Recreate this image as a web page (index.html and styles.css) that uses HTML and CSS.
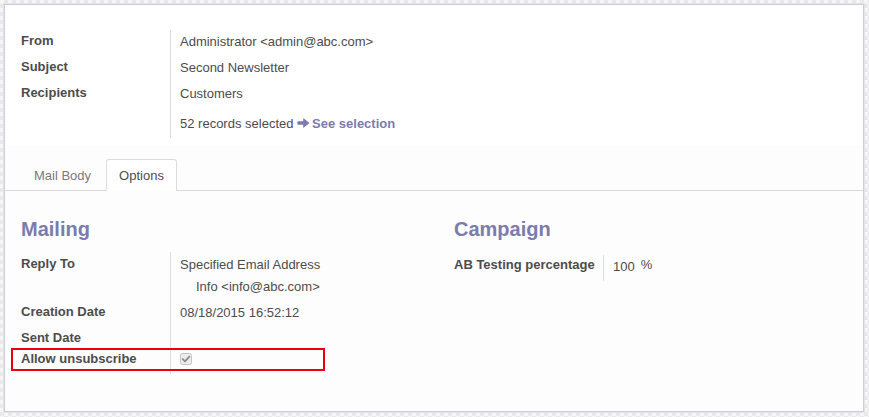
FILE: index.html
```html
<!DOCTYPE html>
<html>
<head>
<meta charset="utf-8">
<link rel="stylesheet" href="styles.css">
</head>
<body>
<div class="sheet">
  <div class="header">
    <div class="grp">
      <div class="lbl r1">From</div><div class="val r1">Administrator &lt;admin@abc.com&gt;</div>
      <div class="lbl r1">Subject</div><div class="val r1">Second Newsletter</div>
      <div class="lbl r1">Recipients</div><div class="val r1">Customers</div>
      <div class="lbl r4"></div>
      <div class="val r4">52 records selected <a class="link"><svg class="arrow" width="13" height="12" viewBox="0 0 13 12"><path d="M1 4.3 H6.2 V1.6 Q6.2 0.8 6.9 1.4 L11.9 5.4 Q12.5 6 11.9 6.6 L6.9 10.6 Q6.2 11.2 6.2 10.4 V7.7 H1 Q0.4 7.7 0.4 7.1 V4.9 Q0.4 4.3 1 4.3 Z" fill="#7c7bad"/></svg>See selection</a></div>
    </div>
  </div>
  <div class="tabs">
    <div class="tab">Mail Body</div>
    <div class="tab active">Options</div>
  </div>
  <div class="pane">
    <div class="cols">
      <div class="col">
        <h2>Mailing</h2>
        <div class="grp">
          <div class="lbl m1">Reply To</div>
          <div class="val m1v"><div>Specified Email Address</div><div class="indent">Info &lt;info@abc.com&gt;</div></div>
          <div class="lbl m2">Creation Date</div><div class="val m2v">08/18/2015 16:52:12</div>
          <div class="lbl m3">Sent Date</div><div class="val m3v"></div>
          <div class="lbl m4">Allow unsubscribe<span class="redbox"></span></div>
          <div class="val m4v"><svg class="chk" width="12" height="12" viewBox="0 0 12 12"><rect x="0.5" y="0.5" width="11" height="11" rx="2" fill="#ececec" stroke="#c4c4c4"/><path d="M2.8 6.2 L5 8.3 L9.3 3.6" fill="none" stroke="#8a8a8a" stroke-width="1.8" stroke-linecap="round" stroke-linejoin="round"/></svg></div>
        </div>
      </div>
      <div class="col">
        <h2>Campaign</h2>
        <div class="grp">
          <div class="lbl c1">AB Testing percentage</div>
          <div class="val c1v"><span class="num">100</span><span class="pct">%</span></div>
        </div>
      </div>
    </div>
  </div>
</div>
</body>
</html>
```

FILE: styles.css
```css
* {
  box-sizing: border-box;
}
html, body {
  margin: 0;
  padding: 0;
}
body {
  width: 869px;
  height: 417px;
  background: repeating-conic-gradient(#e9e9ec 0 25%, #f6f6f7 0 50%) 0 0 / 8px 8px;
  font-family: "Liberation Sans", Arial, sans-serif;
  font-size: 13px;
  color: #4c4c4c;
  padding: 4px 5px 0 4px;
}
.sheet {
  height: 408px;
  background: #fff;
  border: 1px solid #cfcfd8;
  box-shadow: 0 0 0 1px #e2e2ea;
  display: flex;
  flex-direction: column;
}
.header {
  padding: 25px 16px 0 16px;
  height: 140px;
}
.grp {
  display: grid;
  grid-template-columns: 150px 1fr;
}
.lbl {
  font-weight: bold;
  line-height: 18px;
  border-right: 1px solid #dcdcdc;
  position: relative;
}
.val {
  line-height: 18px;
  padding-left: 9px;
}
.r1 { height: 26px; }
.lbl.r1 { padding-top: 2px; }
.val.r1 { padding-top: 3px; }
.r4 { height: 30px; }
.val.r4 { padding-top: 7px; }
.link {
  color: #7c7bad;
  font-weight: bold;
  text-decoration: none;
}
.arrow {
  vertical-align: -1px;
  margin-right: 2px;
}
.tabs {
  display: flex;
  gap: 2px;
  padding: 14px 16px 0 16px;
  background: #fdfdfd;
  border-bottom: 1px solid #d8d8d8;
  height: 46px;
  align-items: flex-end;
}
.tab {
  padding: 0 12px;
  height: 31px;
  line-height: 30px;
  color: #7a7a80;
  border: 1px solid transparent;
  border-bottom: none;
  margin-bottom: -1px;
}
.tab.active {
  color: #4c4c4c;
  background: #fff;
  border-color: #dcdcdc;
  border-radius: 3px 3px 0 0;
  height: 32px;
  padding-top: 1px;
}
.pane {
  flex: 1;
  background: #fdfdfd;
  padding: 26px 16px 0 16px;
}
.cols {
  display: grid;
  grid-template-columns: 433px 1fr;
}
h2 {
  margin: 0;
  font-size: 20px;
  font-weight: bold;
  color: #7c7bad;
  line-height: 24px;
  height: 35px;
}
.m1 { height: 48px; padding-top: 3px; }
.m1v { height: 48px; padding-top: 2px; line-height: 22px; }
.indent { padding-left: 16px; }
.m2 { height: 26px; padding-top: 3px; }
.m2v { height: 26px; padding-top: 4px; }
.m3 { height: 22px; padding-top: 3px; }
.m3v { height: 22px; }
.m4 { height: 26px; padding-top: 2px; }
.m4v { height: 26px; padding-top: 5px; }
.chk { display: block; }
.redbox {
  position: absolute;
  left: -10px;
  top: 0;
  width: 314px;
  height: 23px;
  border: 2px solid #e8000b;
}
.c1 { height: 26px; padding-top: 1px; margin-top: 3px; }
.c1v { height: 26px; padding-top: 3px; margin-top: 3px; }
.pct { margin-left: 6px; position: relative; top: -2px; }
```
